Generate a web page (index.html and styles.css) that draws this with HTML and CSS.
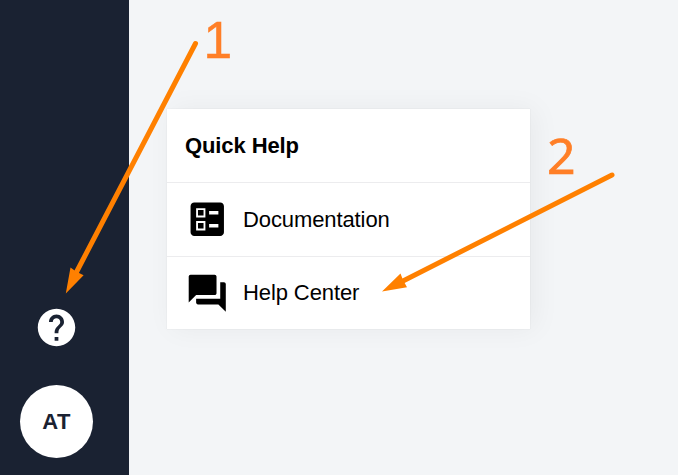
FILE: index.html
```
<!DOCTYPE html>
<html lang="en">
<head>
<meta charset="utf-8">
<title>Quick Help</title>
<link rel="stylesheet" href="styles.css">
</head>
<body>
<div class="app">
  <aside class="sidebar">
    <svg class="help-icon" viewBox="0 0 24 24"><path d="M12 2C6.48 2 2 6.48 2 12s4.480 10 10 10 10-4.480 10-10S17.520 2 12 2zm1 17h-2v-2h2v2zm2.070-7.750l-.9.920C13.450 12.900 13 13.500 13 15h-2v-.5c0-1.100.450-2.100 1.170-2.830l1.240-1.260c.370-.360.590-.860.590-1.410 0-1.100-.900-2-2-2s-2 .900-2 2H8c0-2.210 1.790-4 4-4s4 1.790 4 4c0 .880-.360 1.680-.930 2.250z"/></svg>
    <div class="avatar">AT</div>
  </aside>
  <main class="content">
    <section class="card">
      <h1 class="title">Quick Help</h1>
      <a class="row">
        <svg class="icon" viewBox="0 0 24 24"><path fill-rule="evenodd" d="M13 9.500h5v-2h-5v2zm0 7h5v-2h-5v2zM19 21H5c-1.100 0-2-.900-2-2V5c0-1.100.900-2 2-2h14c1.100 0 2 .900 2 2v14c0 1.100-.900 2-2 2zM6 11h5V6H6v5zm1-4h3v3H7V7zM6 18h5v-5H6v5zm1-4h3v3H7v-3z"/></svg>
        <span>Documentation</span>
      </a>
      <a class="row">
        <svg class="icon" viewBox="0 0 24 24"><path d="M21 6h-2v9H6v2c0 .550.450 1 1 1h11l4 4V7c0-.550-.450-1-1-1zm-4 6V3c0-.550-.450-1-1-1H3c-.550 0-1 .450-1 1v14l4-4h10c.550 0 1-.450 1-1z"/></svg>
        <span>Help Center</span>
      </a>
    </section>
  </main>
</div>
<svg class="annotations" viewBox="0 0 678 475">
  <path class="line" d="M195.500 43.500L76 273M612 175L401 282"/>
  <path class="head" d="M65.800 293.500L70.500 267.500L76 271.500L83.600 275.300ZM382 291.500L400.500 273.500L403 280L407 287.300Z"/>
  <text class="step step-one" x="203.500" y="57.700">1</text>
  <text class="step step-two" x="547" y="173.700">2</text>
</svg>
</body>
</html>
```
FILE: styles.css
```
body {
  margin: 0;
  background: #f3f5f7;
  font-family: "Liberation Sans", Arial, sans-serif;
  color: #000;
}
.app {
  display: flex;
  height: 475px;
  overflow: hidden;
}
.sidebar {
  display: flex;
  flex-direction: column;
  align-items: center;
  justify-content: flex-end;
  gap: 36px;
  width: 129px;
  padding: 0 16px 17px 0;
  box-sizing: border-box;
  background: #1a2232;
}
.help-icon {
  width: 45px;
  height: 45px;
  margin: 0 0 -.500px .500px;
  fill: #fff;
}
.avatar {
  width: 73px;
  height: 73px;
  border-radius: 50%;
  background: #fff;
  color: #1a2232;
  font: bold 22px/73px "Liberation Sans", Arial, sans-serif;
  letter-spacing: .3px;
  text-align: center;
}
.content {
  padding: 109px 0 0 38px;
}
.card {
  width: 363px;
  height: 220px;
  background: #fff;
  box-shadow: 0 0 1px rgba(0, 0, 0, .12), 5px 0 26px rgba(0, 0, 0, .05);
}
.title {
  margin: 0;
  padding-left: 18px;
  font-size: 22px;
  line-height: 73px;
  letter-spacing: -.1px;
}
.row {
  display: flex;
  align-items: center;
  gap: 13.500px;
  height: 73px;
  padding-left: 18px;
  border-top: 1px solid #ececee;
  font-size: 22px;
  letter-spacing: -.1px;
}
.row + .row {
  height: 72px;
}
.icon {
  width: 44.500px;
  height: 44.500px;
}
.annotations {
  position: absolute;
  inset: 0;
  width: 678px;
  height: 475px;
}
.line {
  fill: none;
  stroke: #ff8000;
  stroke-width: 5;
  stroke-linecap: round;
}
.head {
  fill: #ff8000;
}
.step {
  fill: #ff7f27;
  stroke: #ff7f27;
}
.step-one {
  font: 51.500px "Liberation Sans", sans-serif;
  stroke-width: .5px;
  letter-spacing: 0;
}
.step-two {
  font: 50px "Noto Sans", sans-serif;
  stroke-width: .7px;
}
```
